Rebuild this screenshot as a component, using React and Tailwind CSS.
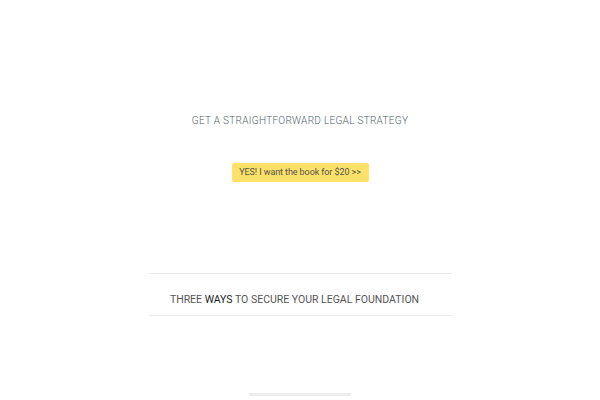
import React from 'react';

const App = () => {
  return (
    <div className="w-[600px] h-[400px] bg-white flex flex-col items-center font-['Roboto',sans-serif] overflow-hidden">
      {/* Hero */}
      <div className="h-[114px]" />
      <h2 className="text-[10px] leading-[14px] tracking-[0.03em] font-light text-[#4f5f6a]">
        GET A STRAIGHTFORWARD LEGAL STRATEGY
      </h2>
      <div className="h-[35px]" />
      <button className="w-[137px] h-[19px] rounded-[2px] bg-[#fde169] text-[#55554a] text-[9px] leading-[19px] tracking-[-0.01em]">
        YES! I want the book for $20 &gt;&gt;
      </button>

      {/* Section heading */}
      <div className="h-[91px]" />
      <div className="w-[303px] flex flex-col">
        <div className="h-px bg-[#ebebeb]" />
        <h3 className="pt-[19px] pb-[8px] pr-[11px] text-center text-[10.5px] leading-[14px] text-[#555]">
          THREE <span className="text-[#222]">WAYS</span> TO SECURE YOUR LEGAL FOUNDATION
        </h3>
        <div className="h-px bg-[#ebebeb]" />
      </div>

      <div className="h-[77px]" />
      <div className="w-[102px] h-[3px] bg-[#eeeeee]" />
    </div>
  );
};

export default App;
